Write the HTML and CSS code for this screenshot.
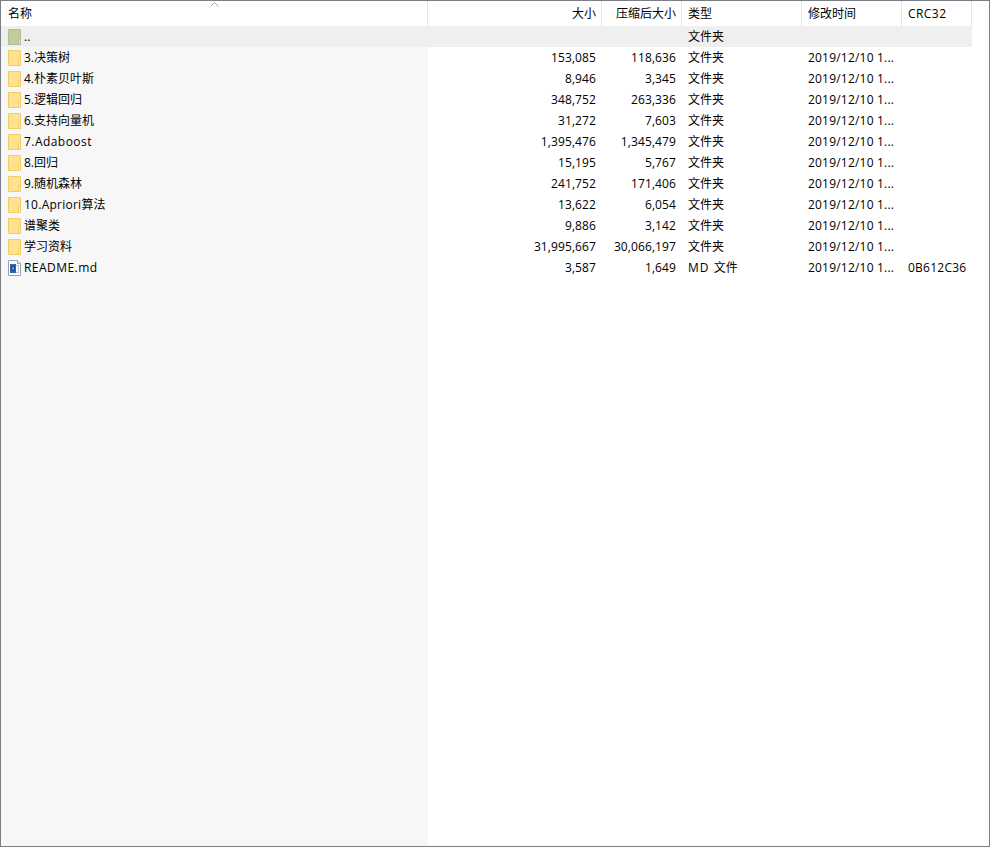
FILE: index.html
```html
<!DOCTYPE html>
<html lang="zh-CN">
<head>
<meta charset="utf-8">
<title>压缩包文件列表</title>
<link rel="stylesheet" href="styles.css">
</head>
<body>
<svg class="defs" width="0" height="0" aria-hidden="true">
  <symbol id="folder" viewBox="0 0 13 16">
    <path d="M.5.5h11.500a.5.5 0 0 1 .5.5v14.500h-12z" fill="currentColor" stroke="var(--edge)"/>
    <path d="M10.500 15.500v-6.500h2v6.500z" fill="var(--fold)" stroke="var(--edge)"/>
  </symbol>
  <symbol id="doc" viewBox="0 0 13 16">
    <path d="M.5.5h9l3 3v12h-12z" fill="#fff" stroke="#9aa3ad"/>
    <path d="M9.500.5v3h3" fill="#eef1f5" stroke="#9aa3ad"/>
    <rect x="7.500" y="5.500" width="3" height="7" fill="#fff" stroke="#a9c4e8"/>
    <rect x="2" y="4" width="6" height="9" fill="#2f66b0"/>
    <path d="M3.500 6.500v4h3v-4z" fill="#5f90cf" stroke="#16448c"/>
  </symbol>
</svg>
<main class="window">
  <div class="row header">
    <div class="cell name head">名称<span class="sort"><svg width="9" height="5" viewBox="0 0 9 5"><path d="M.5 4.500l4-4 4 4" fill="none" stroke="#9aa0a6"/></svg></span></div>
    <div class="cell num head">大小</div>
    <div class="cell num head">压缩后大小</div>
    <div class="cell head">类型</div>
    <div class="cell head">修改时间</div>
    <div class="cell head"><span class="latin">CRC32</span></div>
  </div>
  <div class="row parent">
    <div class="cell name"><svg class="icon up"><use href="#folder"/></svg>..</div>
    <div class="cell num"></div><div class="cell num"></div><div class="cell">文件夹</div><div class="cell"></div><div class="cell"></div>
  </div>
  <div class="row"><div class="cell name"><svg class="icon dir"><use href="#folder"/></svg>3.决策树</div><div class="cell num">153,085</div><div class="cell num">118,636</div><div class="cell">文件夹</div><div class="cell date">2019/12/10 1...</div><div class="cell"></div></div>
  <div class="row"><div class="cell name"><svg class="icon dir"><use href="#folder"/></svg>4.朴素贝叶斯</div><div class="cell num">8,946</div><div class="cell num">3,345</div><div class="cell">文件夹</div><div class="cell date">2019/12/10 1...</div><div class="cell"></div></div>
  <div class="row"><div class="cell name"><svg class="icon dir"><use href="#folder"/></svg>5.逻辑回归</div><div class="cell num">348,752</div><div class="cell num">263,336</div><div class="cell">文件夹</div><div class="cell date">2019/12/10 1...</div><div class="cell"></div></div>
  <div class="row"><div class="cell name"><svg class="icon dir"><use href="#folder"/></svg>6.支持向量机</div><div class="cell num">31,272</div><div class="cell num">7,603</div><div class="cell">文件夹</div><div class="cell date">2019/12/10 1...</div><div class="cell"></div></div>
  <div class="row"><div class="cell name"><svg class="icon dir"><use href="#folder"/></svg><span class="latin">7.Adaboost</span></div><div class="cell num">1,395,476</div><div class="cell num">1,345,479</div><div class="cell">文件夹</div><div class="cell date">2019/12/10 1...</div><div class="cell"></div></div>
  <div class="row"><div class="cell name"><svg class="icon dir"><use href="#folder"/></svg>8.回归</div><div class="cell num">15,195</div><div class="cell num">5,767</div><div class="cell">文件夹</div><div class="cell date">2019/12/10 1...</div><div class="cell"></div></div>
  <div class="row"><div class="cell name"><svg class="icon dir"><use href="#folder"/></svg>9.随机森林</div><div class="cell num">241,752</div><div class="cell num">171,406</div><div class="cell">文件夹</div><div class="cell date">2019/12/10 1...</div><div class="cell"></div></div>
  <div class="row"><div class="cell name"><svg class="icon dir"><use href="#folder"/></svg><span class="crc">10.Apriori</span>算法</div><div class="cell num">13,622</div><div class="cell num">6,054</div><div class="cell">文件夹</div><div class="cell date">2019/12/10 1...</div><div class="cell"></div></div>
  <div class="row"><div class="cell name"><svg class="icon dir"><use href="#folder"/></svg>谱聚类</div><div class="cell num">9,886</div><div class="cell num">3,142</div><div class="cell">文件夹</div><div class="cell date">2019/12/10 1...</div><div class="cell"></div></div>
  <div class="row"><div class="cell name"><svg class="icon dir"><use href="#folder"/></svg>学习资料</div><div class="cell num">31,995,667</div><div class="cell num">30,066,197</div><div class="cell">文件夹</div><div class="cell date">2019/12/10 1...</div><div class="cell"></div></div>
  <div class="row"><div class="cell name"><svg class="icon"><use href="#doc"/></svg><span class="latin">README.md</span></div><div class="cell num">3,587</div><div class="cell num">1,649</div><div class="cell"><span class="md">MD&nbsp;</span>文件</div><div class="cell date">2019/12/10 1...</div><div class="cell"><span class="crc">0B612C36</span></div></div>
</main>
</body>
</html>
```
FILE: styles.css
```css
* { box-sizing: border-box; }
html, body { margin: 0; height: 100%; overflow: hidden; }
.defs { position: absolute; }
.window {
  height: 847px;
  border: 1px solid #7a7e85;
  background: linear-gradient(to right, #f7f7f7 427px, #fff 427px);
  font: 12px/21px "Open Sans", "Noto Sans CJK SC", sans-serif;
  color: #000;
}
.row {
  display: grid;
  grid-template-columns: 427px 174px 80px 120px 100px 70px;
  width: 971px;
  height: 21px;
}
.header { height: 25px; background: #fff; }
.parent { background: #efefef; }
.cell {
  display: flex;
  align-items: center;
  padding: 0 6px;
  white-space: nowrap;
  overflow: hidden;
}
.name { padding-left: 7px; }
.num { justify-content: flex-end; letter-spacing: .1px; }
.date { letter-spacing: .2px; }
.latin { letter-spacing: .45px; white-space: pre; }
.crc { letter-spacing: .25px; }
.md { letter-spacing: 1px; white-space: pre; }
.head { border-right: 1px solid #e5e5e5; height: 25px; letter-spacing: 0; }
.num.head { padding-right: 5px; }
.header .name { position: relative; }
.sort { position: absolute; left: 209px; top: 1px; display: flex; }
.icon { width: 13px; height: 16px; margin-right: 3px; flex: none; }
.dir { color: #ffe28f; --edge: #f0cd66; --fold: #fff0b8; }
.up { color: #c1cca1; --edge: #b0bd8c; --fold: #dfe6c8; }
```
